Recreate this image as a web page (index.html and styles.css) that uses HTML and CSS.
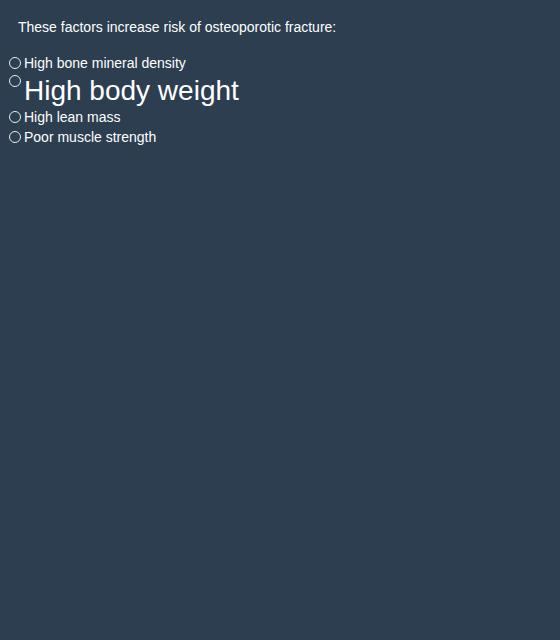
FILE: index.html
```html
<!DOCTYPE html>
<html>
<head>
<meta charset="utf-8">
<link rel="stylesheet" href="styles.css">
</head>
<body>
<div class="quiz">
  <p class="question">These factors increase risk of osteoporotic fracture:</p>
  <ul class="options">
    <li class="option"><span class="radio"></span><span class="label">High bone mineral density</span></li>
    <li class="option option-big"><span class="radio"></span><span class="label">High body weight</span></li>
    <li class="option"><span class="radio"></span><span class="label">High lean mass</span></li>
    <li class="option"><span class="radio"></span><span class="label">Poor muscle strength</span></li>
  </ul>
</div>
</body>
</html>
```

FILE: styles.css
```css
html, body {
  margin: 0;
  padding: 0;
  background: #2c3e50;
  height: 100%;
}
body {
  font-family: "Liberation Sans", Arial, sans-serif;
  font-size: 14px;
  color: #ffffff;
}
.quiz {
  padding: 19px 0 0 9px;
}
.question {
  margin: 0 0 18px 9px;
  line-height: 16px;
}
.options {
  list-style: none;
  margin: 0;
  padding: 0;
}
.option {
  display: flex;
  align-items: flex-start;
  line-height: 20px;
}
.option-big {
  font-size: 28px;
  line-height: 32px;
  padding-top: 2px;
}
.radio {
  box-sizing: border-box;
  flex: none;
  width: 12px;
  height: 12px;
  margin: 4px 3px 0 0;
  border: 1px solid #e8ecef;
  border-radius: 50%;
}
.option-big .radio {
  margin-top: 0;
}
```
